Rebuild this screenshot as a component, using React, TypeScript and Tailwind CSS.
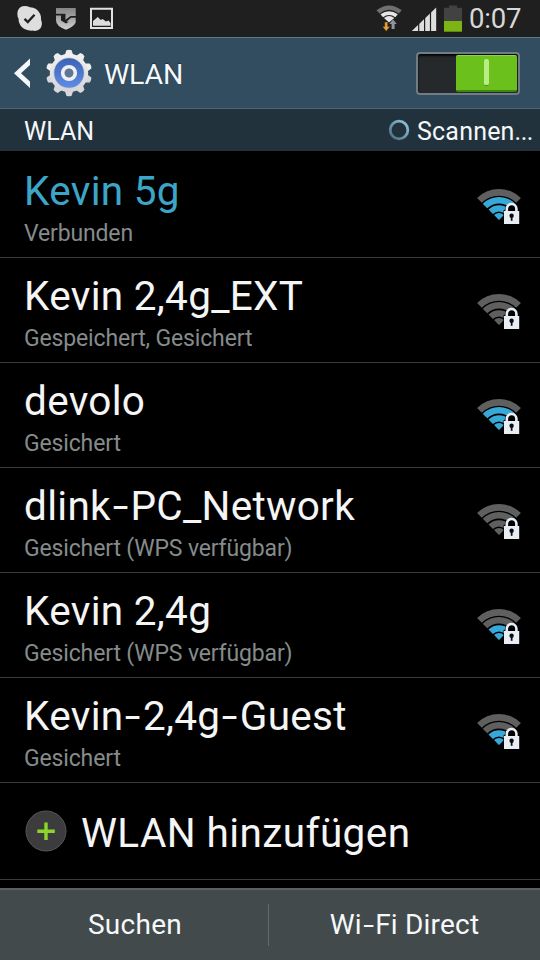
import React from 'react';

type Network = { name: string; note: string; level: number; connected?: boolean };

const networks: Network[] = [
  { name: 'Kevin 5g', note: 'Verbunden', level: 3, connected: true },
  { name: 'Kevin 2,4g_EXT', note: 'Gespeichert, Gesichert', level: 0 },
  { name: 'devolo', note: 'Gesichert', level: 3 },
  { name: 'dlink-PC_Network', note: 'Gesichert (WPS verfügbar)', level: 0 },
  { name: 'Kevin 2,4g', note: 'Gesichert (WPS verfügbar)', level: 2 },
  { name: 'Kevin-2,4g-Guest', note: 'Gesichert', level: 2 },
];

// Sets each hyphen in a wider cell than the font gives it.
function WideHyphens({ text }: { text: string }) {
  return (
    <>
      {text.split(/(-)/).map((part, i) =>
        part === '-' ? (
          <span key={i} className="inline-block w-[0.48em] scale-x-[1.4] text-center tracking-normal">-</span>
        ) : (
          part
        ),
      )}
    </>
  );
}

// Annular 90° sector opening upwards from the apex (22, 32).
function band(outer: number, inner: number) {
  const k = Math.SQRT1_2;
  const o = outer * k;
  const i = inner * k;
  return `M${22 - o} ${32 - o}A${outer} ${outer} 0 0 1 ${22 + o} ${32 - o}L${22 + i} ${32 - i}A${inner} ${inner} 0 0 0 ${22 - i} ${32 - i}Z`;
}

function WifiLock({ level }: { level: number }) {
  const color = (n: number) => (level >= n ? '#36a9d8' : '#5f5f5f');
  return (
    <svg width="44" height="38" viewBox="0 0 44 38" className="shrink-0">
      <path d={band(31, 24.3)} fill={color(4)} />
      <path d={band(23, 16.600)} fill={color(3)} />
      <path d={band(14.8, 8.6)} fill={color(2)} />
      <path d={band(7, 0.1)} fill={color(1)} />
      <path d="M26.600 37.5V22h1a6.800 7 0 0 1 13.500 0h1v15.500Z" fill="#000" />
      <path d="M29.800 24v-3.200a4.800 4.800 0 0 1 9.600 0V24" fill="none" stroke="#e9eef4" strokeWidth="2.600" />
      <rect x="27" y="23" width="15.200" height="13" fill="#e9eef4" />
      <circle cx="34.600" cy="27.700" r="2.200" fill="#0a0c10" />
      <path d="M33.800 28h1.700v4.800H33.800Z" fill="#0a0c10" />
    </svg>
  );
}

function StatusBar() {
  return (
    <div className="flex h-[37px] items-start bg-[#1f1f1f]">
      <svg width="130" height="37" viewBox="0 0 130 37">
        <defs>
          <linearGradient id="shield" x1="0" y1="8" x2="0" y2="30" gradientUnits="userSpaceOnUse">
            <stop offset="0" stopColor="#858585" />
            <stop offset="1" stopColor="#cfcfcf" />
          </linearGradient>
        </defs>
        <path d="M24.500 6Q27.500 6 30 7.200Q37 7.500 40.200 14Q41.200 16.500 41 19.500Q43 24.500 40.500 28.300Q37.500 32 32.500 30.600Q24.500 31 20.500 25.500Q18.300 22.300 18.500 18.500Q16.400 14.500 18 10.200Q20.300 6 24.500 6Z" fill="#dedede" />
        <path d="M24.500 18.800l3.300 3.200 6.700-7.200" fill="none" stroke="#222" strokeWidth="2.400" />
        <path d="M56 8H75.700V16H70.500L65.500 19.800V13.800H56Z" fill="url(#shield)" />
        <path d="M56 15.500H61V20.500L66 23.500L69 21.700H66.500L71 17.800H75.700V22.500Q73.500 27 66 29.800Q56 26 56 20.500Z" fill="url(#shield)" />
        <path d="M90 7.800H113V29H90Z M92 9.800V27H111V9.800Z" fillRule="evenodd" fill="#e2e2e2" />
        <path d="M93 25.800V21l4.800-4 3 3 1.800-1 3.400 2.500 2.500-1 2 2.500v2.800Z" fill="#dcdcdc" />
      </svg>
      <div className="flex-1" />
      <svg width="90" height="37" viewBox="375 0 90 37">
        <path d="M376.500 10.200Q389 .8 401.700 10.200L398.800 13.400Q389 6.300 379.500 13.400Z" fill="#707070" />
        <path d="M380.500 14.300Q389 8 397.800 14.300L395.300 17.300Q389 12.600 383 17.300Z" fill="#e6e6e6" />
        <path d="M384 18Q389 14.200 394.300 18L389 22.500Z" fill="#e6e6e6" />
        <path d="M384.700 22h3v4.500h2.300l-3.800 4.800-3.800-4.800h2.300Z" fill="#e9a02f" stroke="#1f1f1f" strokeWidth=".4" />
        <path d="M391.600 29v-5H389.400l3.700-4.500 3.700 4.500h-2.200v5Z" fill="#9493a0" />
        <path d="M411.800 31L436.200 7.500V31Z" fill="#dedede" />
        <path d="M418.700 22v9M424.600 17v14M430.500 12v19" stroke="#1f1f1f" strokeWidth="1.200" />
        <path d="M444 7.800h5V5.500h8v2.300h5V21h-18Z" fill="#424242" />
        <path d="M444 21h18v10.700h-18Z" fill="#7cb414" />
      </svg>
      <span className="w-[75px] pl-[4px] text-[27.500px] leading-[37px] tracking-[-0.2px] text-[#d8d8d8]">0:07</span>
    </div>
  );
}

function GearIcon() {
  const teeth = Array.from({ length: 10 }, (_, i) => i * 36);
  return (
    <svg width="48" height="48" viewBox="0 0 48 48">
      <defs>
        <linearGradient id="gear" x1="0" y1="0" x2="0" y2="1">
          <stop offset="0" stopColor="#f2f2f2" />
          <stop offset="1" stopColor="#d5d5d9" />
        </linearGradient>
        <linearGradient id="disc" x1="0" y1="0" x2="0" y2="1">
          <stop offset="0" stopColor="#3d62b4" />
          <stop offset="1" stopColor="#5f8de4" />
        </linearGradient>
      </defs>
      {teeth.map((a) => (
        <path key={a} d="M19.500 7L21.400 1.300Q24 .3 26.600 1.300L28.500 7Z" fill={a > 90 && a < 270 ? '#d8d8dc' : '#eeeeee'} transform={`rotate(${a} 24 24)`} />
      ))}
      <circle cx="24" cy="24" r="19.200" fill="url(#gear)" />
      <circle cx="24" cy="24" r="15.600" fill="#c8ccd5" />
      <circle cx="24" cy="24" r="14.800" fill="url(#disc)" />
      <circle cx="24" cy="24" r="6.300" fill="#5f7690" stroke="#edf0f5" strokeWidth="3.600" />
    </svg>
  );
}

function ActionBar() {
  return (
    <header className="flex h-[72px] items-center border-y border-t-[#60798a] border-b-[#4b6777] bg-[#324d60]">
      <svg width="45" height="70" viewBox="0 0 45 70">
        <path d="M30 20.500V27L21 35.200L30 43.500V50L14 35.200Z" fill="#f4f8fb" />
      </svg>
      <GearIcon />
      <h1 className="ml-[11px] flex-1 pt-[3px] text-[28.500px] leading-[70px] tracking-[-0.2px] text-[#f4f8fb] [text-shadow:0_-1px_1px_#1a2d3a]">WLAN</h1>
      <div className="mr-[20px] flex h-[43px] w-[104px] justify-end rounded-[4px] border-2 border-[#717d82] bg-[#25292c] p-[1px] shadow-[inset_0_2px_2px_#050607]">
        <div className="flex w-[61px] items-center justify-center rounded-[2px] border-t border-b-2 border-t-[#8bd646] border-b-[#3d8710] bg-[#6bc01c]">
          <div className="h-[27px] w-[5px] rounded-[2px] border-b border-[#458b17] bg-[#b8ee83]" />
        </div>
      </div>
    </header>
  );
}

function ScanBar() {
  return (
    <div className="flex h-[42px] items-center bg-[#22323c] text-[25px] leading-[40px] text-[#f4f8fa]">
      <span className="flex-1 pl-[24px] pt-[4px]">WLAN</span>
      <svg width="22" height="22" viewBox="0 0 22 22" className="mr-[7px]">
        <defs>
          <linearGradient id="spin" x1="0" y1="1" x2="1" y2="0">
            <stop offset="0" stopColor="#4d6b7c" />
            <stop offset="1" stopColor="#8ec9e2" />
          </linearGradient>
        </defs>
        <circle cx="11" cy="11" r="8.800" fill="none" stroke="url(#spin)" strokeWidth="2.800" />
      </svg>
      <span className="w-[123px] whitespace-nowrap pt-[4px]">
        <span className="tracking-[0.2px]">Scannen</span>
        <span className="tracking-[-0.5px]">...</span>
      </span>
    </div>
  );
}

export default function App() {
  return (
    <div className="flex h-[960px] w-[540px] flex-col overflow-hidden bg-black font-['Roboto',sans-serif]">
      <StatusBar />
      <ActionBar />
      <ScanBar />
      <ul className="pt-[2px]">
        {networks.map((n) => (
          <li key={n.name} className="flex h-[105px] items-start justify-between border-b border-[#3b3b3b] pl-[24px] pr-[19px]">
            <div className="whitespace-nowrap">
              <div className={`mt-[14px] text-[40.500px] leading-[48px] tracking-[0.3px] ${n.connected ? 'text-[#3ca5c8]' : 'text-[#f5f5f5]'}`}>
                <WideHyphens text={n.name} />
              </div>
              <div className="mt-[5px] text-[23px] leading-[28px] tracking-[-0.150px] text-[#858b8b]">{n.note}</div>
            </div>
            <div className="pt-[35px]"><WifiLock level={n.level} /></div>
          </li>
        ))}
      </ul>
      <div className="flex h-[97px] items-center border-b border-[#3b3b3b] pl-[25px]">
        <svg width="42" height="42" viewBox="0 0 42 42">
          <circle cx="21" cy="21" r="20" fill="#3c3c3e" stroke="#555557" />
          <path d="M21 12.500v17.500M12.300 21.300h17.500" stroke="#8cd42a" strokeWidth="3.400" />
        </svg>
        <span className="ml-[14px] pt-[3px] text-[40.500px] leading-[48px] tracking-[0.4px] text-[#f5f5f5]">WLAN hinzufügen</span>
      </div>
      <footer className="mt-[8px] flex h-[72px] items-center border-t-2 border-[#596163] bg-[#434a4c] text-[28px] text-[#f5f9fa]">
        <button className="h-full w-[268px] pl-[2px] tracking-[0.3px]">Suchen</button>
        <div className="h-[42px] w-px bg-[#626b6d]" />
        <button className="h-full flex-1 tracking-[0.2px]"><WideHyphens text="Wi-Fi Direct" /></button>
      </footer>
    </div>
  );
}
